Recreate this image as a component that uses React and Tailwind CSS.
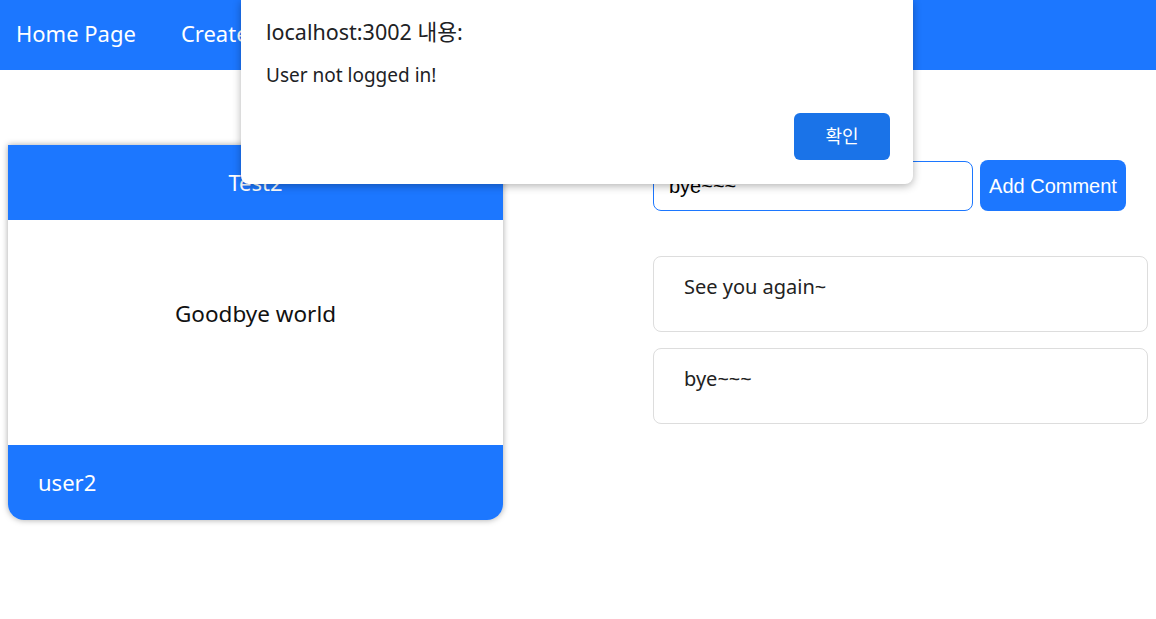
export default function App() {
  const font = { fontFamily: '"Noto Sans", "Noto Sans CJK KR", sans-serif' };
  return (
    <div className="relative w-[1156px] h-[619px] bg-white overflow-hidden" style={font}>
      <nav className="h-[70px] bg-[#1c77ff] flex items-center pl-[16px] pb-[4px] gap-[45px] text-white text-[22px]">
        <span>Home Page</span>
        <span>Create Post</span>
        <span>Login</span>
      </nav>
      <div className="flex gap-[150px]">
        <div className="pl-[8px] pt-[75px]">
          <div className="w-[495px] rounded-b-[16px] shadow-[0_0_6px_rgba(0,0,0,0.35)] overflow-hidden">
            <div className="h-[75px] bg-[#1c77ff] text-white text-[22px] flex items-center justify-center">Test2</div>
            <div className="h-[225px] bg-white text-[22.5px] text-[#111] flex justify-center pt-[77px]">Goodbye world</div>
            <div className="h-[75px] bg-[#1c77ff] text-white text-[22px] flex items-center pl-[30px]">user2</div>
          </div>
        </div>
        <div className="pt-[90px] flex flex-col">
          <div className="flex items-center gap-[7px]">
            <div className="w-[320px] h-[50px] border border-[#1c77ff] rounded-[8px] flex items-center pl-[15px] text-[20px] text-black" style={{ fontFamily: '"Liberation Sans", Arial, sans-serif' }}>bye~~~</div>
            <button className="w-[146px] h-[51px] bg-[#1c77ff] rounded-[8px] text-white text-[20px]" style={{ fontFamily: '"Liberation Sans", Arial, sans-serif' }}>Add Comment</button>
          </div>
          <div className="mt-[45px] flex flex-col gap-[16px]">
            <div className="w-[495px] h-[76px] border border-[#dddddd] rounded-[8px] pl-[30px] pt-[15px] text-[20px] text-[#222]">See you again~</div>
            <div className="w-[495px] h-[76px] border border-[#dddddd] rounded-[8px] pl-[30px] pt-[15px] text-[20px] text-[#222]">bye~~~</div>
          </div>
        </div>
      </div>
      <div className="absolute left-[241px] top-0 w-[672px] h-[184px] bg-white rounded-b-[8px] shadow-[0_2px_8px_rgba(0,0,0,0.3)] px-[25px] pt-[16px] flex flex-col">
        <div className="text-[21.5px] text-[#202124] leading-[32px]">localhost:3002 내용:</div>
        <div className="text-[19px] text-[#202124] mt-[14px] leading-[26px]">User not logged in!</div>
        <div className="flex justify-end mt-auto mb-[24px] -mr-[2px]">
          <button className="w-[96px] h-[47px] bg-[#1a73e8] rounded-[6px] text-white text-[18px]">확인</button>
        </div>
      </div>
    </div>
  );
}
